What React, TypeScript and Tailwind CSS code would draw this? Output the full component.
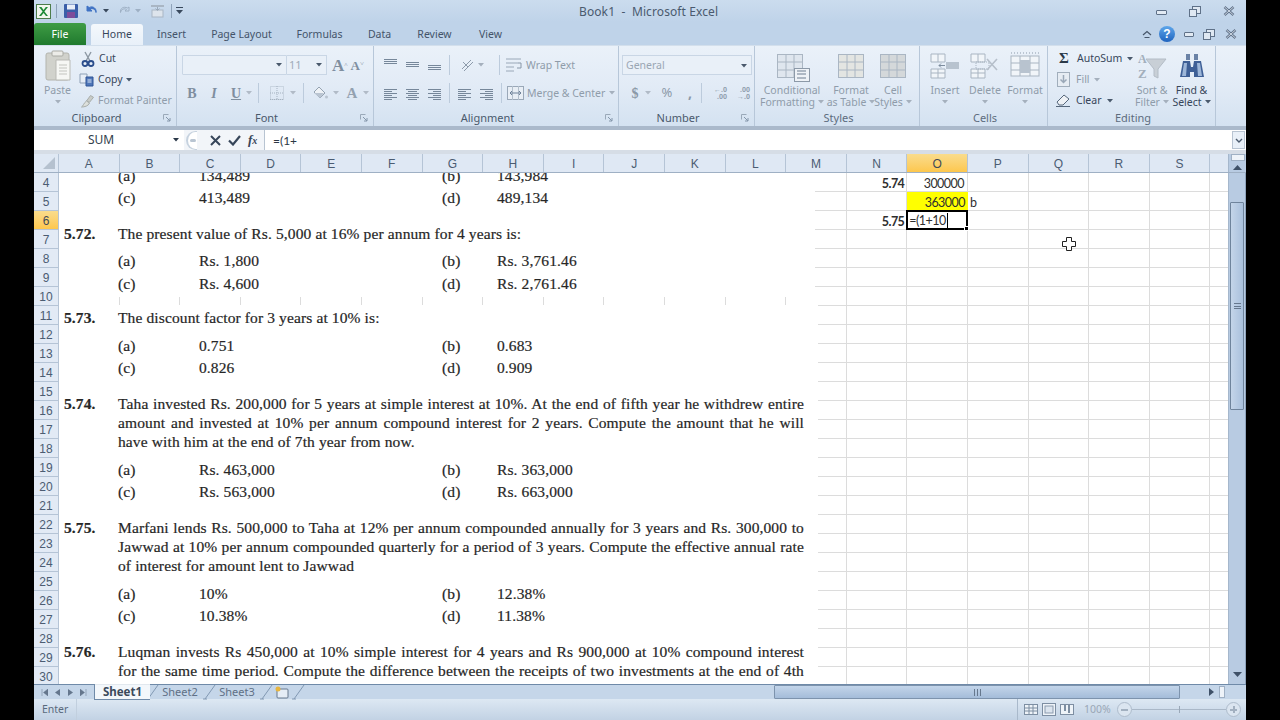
import React from 'react';

const COLS = ['A','B','C','D','E','F','G','H','I','J','K','L','M','N','O','P','Q','R','S'];
const ROWS = Array.from({ length: 27 }, (_, i) => i + 4);

const off = 'text-[#8f9caa]';
const on = 'text-[#37465a]';

function Arrow({ c = '#8a97a6' }: { c?: string }) {
  return <svg width="6" height="4" viewBox="0 0 6 4" className="shrink-0"><path d="M0 0h6L3 3.5z" fill={c} /></svg>;
}

function Sep({ h = 'h-[20px]' }: { h?: string }) {
  return <div className={`w-px shrink-0 bg-[#bccbdc] ${h}`} />;
}

function Launcher() {
  return (
    <svg width="9" height="9" viewBox="0 0 9 9" className="absolute right-[4px] bottom-[3px]">
      <path d="M0.5 0.5h5M0.5 0.5v5" stroke="#9aa9b9" fill="none" />
      <path d="M3 3l4 4M7 4v3H4" stroke="#8496aa" fill="none" />
    </svg>
  );
}

function Group({ w, label, launcher, dim, children }: { w: string; label: string; launcher?: boolean; dim?: boolean; children: React.ReactNode }) {
  return (
    <div className={`${w} shrink-0 h-full relative flex flex-col border-r border-[#b7c7d9]`}>
      <div className="h-[65px] flex shrink-0">{children}</div>
      <div className={`h-[15px] flex items-center justify-center text-[11px] ${launcher ? 'pr-[17px]' : 'pl-[3px]'} ${dim ? 'text-[#5d6c7e]' : 'text-[#4a596c]'}`}>{label}</div>
      {launcher && <Launcher />}
    </div>
  );
}

function Big({ w, icon, a, b, arrow, dark }: { w: string; icon: React.ReactNode; a: string; b?: string; arrow?: boolean; dark?: boolean }) {
  return (
    <div className={`${w} shrink-0 flex flex-col items-center`}>
      <div className="h-[35px] flex items-center justify-center mt-[2px]">{icon}</div>
      <div className={`text-[10.5px] leading-[12px] whitespace-nowrap mt-[1px] ${dark ? on : off}`}>{a}</div>
      {b ? (
        <div className={`text-[10.5px] leading-[12px] whitespace-nowrap flex items-center gap-[3px] ${dark ? on : off}`}>
          {b}{arrow && <Arrow c={dark ? '#4a596c' : '#a5b0bd'} />}
        </div>
      ) : (
        <div className="h-[12px] flex items-center"><Arrow c="#a5b0bd" /></div>
      )}
    </div>
  );
}

function LinesIcon({ kind }: { kind: 'top' | 'mid' | 'bot' | 'left' | 'center' | 'right' }) {
  const L: Record<string, number[][]> = {
    top: [[1, 3, 13], [1, 5, 13], [1, 7, 13]],
    mid: [[1, 6, 13], [1, 8, 13], [1, 10, 13]],
    bot: [[1, 9, 13], [1, 11, 13], [1, 13, 13]],
    left: [[1, 3, 13], [1, 5, 8], [1, 7, 13], [1, 9, 8], [1, 11, 13], [1, 13, 8]],
    center: [[1, 3, 13], [3, 5, 9], [1, 7, 13], [3, 9, 9], [1, 11, 13], [3, 13, 9]],
    right: [[1, 3, 13], [6, 5, 8], [1, 7, 13], [6, 9, 8], [1, 11, 13], [6, 13, 8]],
  };
  return (
    <svg width="14" height="15" viewBox="0 0 14 15">
      {L[kind].map((l, i) => <rect key={i} x={l[0]} y={l[1]} width={l[2]} height="1" fill="#76879a" />)}
    </svg>
  );
}

function TableIcon({ w = 26, h = 24, fill = '#dfe6ee' }: { w?: number; h?: number; fill?: string }) {
  return (
    <svg width={w} height={h} viewBox="0 0 26 24">
      <rect x="0.5" y="0.5" width="25" height="23" fill={fill} stroke="#aab6c3" />
      <path d="M0 8h26M0 16h26M9 0v24M17 0v24" stroke="#aab6c3" />
    </svg>
  );
}

function App() {
  return (
    <div className="w-[1280px] h-[720px] bg-black overflow-hidden font-['Noto_Sans',sans-serif] text-[11px]">
      <div className="ml-[34px] w-[1212px] h-[720px] flex flex-col bg-[#c8d8ea]">
        <TitleBar />
        <TabBar />
        <Ribbon />
        <div className="h-[4px] shrink-0 bg-[#aab9cb]" />
        <FormulaBar />
        <div className="h-[4px] shrink-0 bg-[#d6dde6]" />
        <ColumnHeader />
        <SheetBody />
        <SheetTabs />
        <StatusBar />
      </div>
    </div>
  );
}

function TitleBar() {
  return (
    <div className="h-[22px] shrink-0 flex items-center bg-gradient-to-b from-[#cbdcee] to-[#bfd3e9] relative">
      <div className="flex items-center pl-[2px] gap-[4px] w-[180px]">
        <svg width="15" height="15" viewBox="0 0 15 15">
          <rect x="0.5" y="0.5" width="14" height="14" fill="#f3f7ee" stroke="#4d7c4a" />
          <path d="M3 3l3.6 4.6L3 12h2.2l2.4-3 2.4 3H12L8.4 7.6 12 3H9.8L7.6 6 5.4 3z" fill="#1f8a37" />
        </svg>
        <div className="w-px h-[14px] bg-[#8fa3ba] ml-[1px]" />
        <svg width="16" height="16" viewBox="0 0 16 16" className="ml-[2px]">
          <rect x="1" y="1" width="14" height="14" rx="1" fill="#3a5ea8" />
          <rect x="4" y="1.5" width="8" height="5" fill="#e8eef8" />
          <rect x="4" y="9" width="8" height="6" fill="#7d4c9a" />
        </svg>
        <svg width="14" height="14" viewBox="0 0 14 14" className="ml-[2px]">
          <path d="M2 2v5h5L5 5.2C7.5 3.8 10.5 5 11 8.5c.9-3.8-3-7-6.8-5L2 2z" fill="#3f72c4" stroke="#3f72c4" />
        </svg>
        <Arrow c="#39495d" />
        <svg width="14" height="14" viewBox="0 0 14 14" className="ml-[4px]">
          <path d="M12 3v4H8l1.5-1.5C7.5 4 4.5 5 3.5 8.5 2.8 4.5 6.5 2 10.4 4z" fill="none" stroke="#9eb0c4" />
        </svg>
        <Arrow c="#9eb0c4" />
        <svg width="16" height="16" viewBox="0 0 16 16" className="ml-[5px]">
          <rect x="1" y="2" width="13" height="2" fill="#a9b6c4" />
          <rect x="2" y="7" width="11" height="7" fill="#dde4ec" stroke="#a9b6c4" />
          <path d="M7.5 4v3M5.5 5.5l2 2 2-2" stroke="#9aa9b9" fill="none" />
        </svg>
        <div className="w-px h-[14px] bg-[#8fa3ba] ml-[1px]" />
        <svg width="7" height="8" viewBox="0 0 7 8"><rect x="0" y="0" width="7" height="1" fill="#39495d" /><path d="M0 3h7L3.5 7z" fill="#39495d" /></svg>
      </div>
      <div className="absolute left-[545px] top-[4px] text-[12px] leading-[16px] text-[#4a5a6e] whitespace-pre tracking-[0.1px]">Book1  -  Microsoft Excel</div>
      <div className="ml-auto flex items-center pr-[11px] gap-[22px]">
        <div className="w-[11px] h-[5px] border border-[#5f7188] rounded-[1px] bg-[#e2eaf3] mt-[2px]" />
        <svg width="12" height="11" viewBox="0 0 12 11"><rect x="3.5" y="0.5" width="8" height="7" fill="#dfe8f2" stroke="#5f7188" /><rect x="0.5" y="3.5" width="7" height="7" fill="#dfe8f2" stroke="#5f7188" /></svg>
        <svg width="12" height="10" viewBox="0 0 12 10"><path d="M1.5 1L10.5 9M10.5 1L1.5 9" stroke="#5f7188" strokeWidth="2.4" /><path d="M1.5 1L10.5 9M10.5 1L1.5 9" stroke="#e6eef6" strokeWidth="0.8" /></svg>
      </div>
    </div>
  );
}

function TabBar() {
  const tabs: [string, string][] = [['Insert', 'w-[57px]'], ['Page Layout', 'w-[83px]'], ['Formulas', 'w-[73px]'], ['Data', 'w-[47px]'], ['Review', 'w-[63px]'], ['View', 'w-[49px]']];
  return (
    <div className="h-[23px] shrink-0 flex items-end bg-[#bfd3e9] relative">
      <div className="w-[52px] h-[22px] pt-[1px] bg-gradient-to-b from-[#3f9c45] to-[#1f7a2e] rounded-t-[3px] text-white flex items-center justify-center text-[10.5px]">File</div>
      <div className="ml-[5px] w-[52px] h-[21px] pt-[1px] bg-gradient-to-b from-[#f4f8fc] to-[#e8f0f9] rounded-t-[3px] text-[#37465a] flex items-center justify-center text-[10.5px]">Home</div>
      {tabs.map(([t, w]) => (
        <div key={t} className={`${w} shrink-0 h-[21px] pt-[1px] flex items-center justify-center text-[#44546a] text-[10.5px]`}>{t}</div>
      ))}
      <div className="ml-auto h-[22px] flex items-center pr-[9px] gap-[7px]">
        <svg width="10" height="8" viewBox="0 0 10 8"><path d="M1 5l4-3.5L9 5M2.5 7.5h5" stroke="#46566a" fill="none" strokeWidth="1.2" /></svg>
        <div className="w-[16px] h-[16px] rounded-full bg-gradient-to-b from-[#5ea6ea] to-[#1f64bf] text-white font-bold text-[12px] leading-[16px] text-center font-['Liberation_Sans',sans-serif]">?</div>
        <div className="w-[10px] h-[5px] border border-[#5f7188] rounded-[1px] bg-[#e2eaf3] ml-[2px]" />
        <svg width="12" height="11" viewBox="0 0 12 11" className="ml-[2px]"><rect x="3.5" y="0.5" width="8" height="7" fill="#dfe8f2" stroke="#5f7188" /><rect x="0.5" y="3.5" width="7" height="7" fill="#dfe8f2" stroke="#5f7188" /></svg>
        <svg width="12" height="10" viewBox="0 0 12 10" className="ml-[3px]"><path d="M1.5 1L10.5 9M10.5 1L1.5 9" stroke="#5f7188" strokeWidth="2.4" /><path d="M1.5 1L10.5 9M10.5 1L1.5 9" stroke="#e6eef6" strokeWidth="0.8" /></svg>
      </div>
    </div>
  );
}

function Ribbon() {
  return (
    <div className="h-[81px] shrink-0 flex bg-gradient-to-b from-[#eaf1f9] via-[#e2ebf6] to-[#d4e2f1] border-t border-[#d3dfec]">
      <Group w="w-[143px]" label="Clipboard" launcher>
        <Big w="w-[47px]" a="Paste" icon={
          <svg width="26" height="31" viewBox="0 0 26 31">
            <rect x="1" y="3" width="23" height="27" rx="2" fill="#d1d2cc" stroke="#b3b4ae" />
            <rect x="7" y="1" width="11" height="5" rx="1" fill="#ecece8" stroke="#a9aaa4" />
            <path d="M11 10h14v20H11z" fill="#f6f7f4" stroke="#b9bab5" />
            <path d="M14 15h8M14 18h8M14 21h8M14 24h8" stroke="#c3c4bf" />
          </svg>} />
        <div className="flex flex-col pt-[1px]">
          <div className="h-[21px] flex items-center gap-[4px] mt-[1px]">
            <svg width="14" height="16" viewBox="0 0 14 16">
              <path d="M4 1l5 9M10 1L5 10" stroke="#8d98a3" strokeWidth="1.4" />
              <circle cx="4" cy="12.5" r="2.5" fill="none" stroke="#2a4d8c" strokeWidth="1.8" />
              <circle cx="10" cy="12.5" r="2.5" fill="none" stroke="#2a4d8c" strokeWidth="1.8" />
            </svg>
            <span className={`${on} text-[10.5px]`}>Cut</span>
          </div>
          <div className="h-[21px] flex items-center gap-[3px] -ml-[2px]">
            <svg width="16" height="14" viewBox="0 0 16 14">
              <path d="M1 1h7v9H1z" fill="#e7eef7" stroke="#8ea0b6" />
              <path d="M7 4h7v9H7z" fill="#4f76b8" stroke="#2f5597" />
              <path d="M8.500 7h4M8.500 9h4" stroke="#dbe6f5" />
            </svg>
            <span className={`${on} text-[10.5px]`}>Copy</span>
            <Arrow c="#4a596c" />
          </div>
          <div className="h-[21px] flex items-center gap-[3px] -ml-[2px]">
            <svg width="16" height="14" viewBox="0 0 15 14">
              <path d="M7 7L11 1.500l3 1.800-4 5z" fill="#c9ccc8" stroke="#a8adaa" />
              <path d="M2 13c2-1 2-4 5-6l3 2c-1 3-5 4-8 4z" fill="#dde0dc" stroke="#a8adaa" />
            </svg>
            <span className={`${off} text-[10.5px] whitespace-nowrap`}>Format Painter</span>
          </div>
        </div>
      </Group>

      <Group w="w-[197px]" label="Font" launcher>
        <div className="flex flex-col pl-[5px]">
          <div className="flex items-center h-[20px] mt-[9px]">
            <div className="w-[105px] h-[20px] border border-[#c9d6e5] bg-[#e9f0f8] flex items-center justify-end pr-[4px] rounded-l-[1px]"><Arrow c="#4a596c" /></div>
            <div className="w-[40px] h-[20px] border border-l-0 border-[#c9d6e5] bg-[#e9f0f8] flex items-center justify-between pl-[2px] pr-[4px] text-[#a0acb9] text-[11px]">11<Arrow c="#4a596c" /></div>
            <span className="ml-[5px] text-[17px] leading-[17px] font-bold text-[#7f8e9f] font-['Liberation_Serif',serif]">A<sup className="text-[7px] font-normal">^</sup></span>
            <span className="ml-[3px] text-[13px] leading-[13px] font-bold text-[#7f8e9f] font-['Liberation_Serif',serif]">A<sup className="text-[7px] font-normal">˅</sup></span>
          </div>
          <div className="flex items-center h-[20px] mt-[8px] font-['Liberation_Serif',serif] text-[#7f8e9f]">
            <span className="w-[20px] text-center font-bold text-[14px]">B</span>
            <span className="w-[20px] ml-[2px] text-center italic font-bold text-[14px]">I</span>
            <span className="w-[20px] ml-[2px] text-center font-bold text-[14px] underline">U</span>
            <span className="w-[8px] flex"><Arrow c="#b1bbc7" /></span>
            <span className="ml-[4px]"><Sep /></span>
            <svg width="14" height="14" viewBox="0 0 14 14" className="ml-[11px]">
              <rect x="0.500" y="0.500" width="13" height="13" fill="none" stroke="#b3bfcc" strokeDasharray="1 1" />
              <path d="M0 7h14M7 0v14M0 13.500h14" stroke="#a5b2c0" strokeDasharray="1 1" />
            </svg>
            <span className="ml-[6px]"><Arrow c="#b1bbc7" /></span>
            <span className="ml-[7px]"><Sep /></span>
            <svg width="17" height="15" viewBox="0 0 17 15" className="ml-[8px]">
              <path d="M7 1l6 6-5 5-6-6z" fill="#eef2f6" stroke="#94a2b1" />
              <path d="M2 7h10l-4 5z" fill="#bac5d2" />
              <circle cx="14.500" cy="11" r="1.500" fill="#b9c3cf" />
            </svg>
            <span className="ml-[4px]"><Arrow c="#b1bbc7" /></span>
            <span className="ml-[6px] w-[14px] text-center font-bold text-[15px] text-[#93a1b0]">A</span>
            <span className="ml-[4px]"><Arrow c="#b1bbc7" /></span>
          </div>
        </div>
      </Group>

      <Group w="w-[245px]" label="Alignment" launcher>
        <div className="flex flex-col pl-[5px]">
          <div className="flex items-center h-[20px] mt-[9px]">
            <span className="w-[22px] flex justify-center -mt-[3px]"><LinesIcon kind="top" /></span>
            <span className="w-[22px] flex justify-center -mt-[3px]"><LinesIcon kind="mid" /></span>
            <span className="w-[22px] flex justify-center -mt-[3px]"><LinesIcon kind="bot" /></span>
            <span className="ml-[4px]"><Sep /></span>
            <svg width="16" height="14" viewBox="0 0 16 14" className="ml-[10px]"><path d="M2 11L11 2M4 13L13 4M3 4l5 5" stroke="#8d9bab" fill="none" /></svg>
            <span className="ml-[2px]"><Arrow c="#a5b0bd" /></span>
            <span className="ml-[15px]"><Sep /></span>
            <svg width="17" height="14" viewBox="0 0 17 14" className="ml-[6px]"><path d="M0 1h15M0 5h12M0 9h8M0 13h8" stroke="#9aa8b8" /><path d="M12 5h3v5h-4" stroke="#8796a7" fill="none" /></svg>
            <span className={`${off} ml-[3px] mt-[2px] text-[10.5px]`}>Wrap Text</span>
          </div>
          <div className="flex items-center h-[20px] mt-[8px]">
            <span className="w-[22px] flex justify-center"><LinesIcon kind="left" /></span>
            <span className="w-[22px] flex justify-center"><LinesIcon kind="center" /></span>
            <span className="w-[22px] flex justify-center"><LinesIcon kind="right" /></span>
            <span className="ml-[4px]"><Sep /></span>
            <span className="ml-[3px] w-[22px] flex justify-center"><LinesIcon kind="left" /></span>
            <span className="w-[22px] flex justify-center"><LinesIcon kind="right" /></span>
            <span className="ml-[4px]"><Sep /></span>
            <svg width="17" height="14" viewBox="0 0 17 14" className="ml-[5px]"><rect x="0.500" y="0.500" width="16" height="13" fill="#e8eef5" stroke="#9aa8b8" /><path d="M5.500 0v14M11.500 0v14" stroke="#b3bfcc" /><path d="M3 7h11M5 5L3 7l2 2M12 5l2 2-2 2" stroke="#6f8299" fill="none" /></svg>
            <span className={`${off} ml-[3px] mt-[2px] text-[10.5px] whitespace-nowrap`}>Merge &amp; Center</span>
            <span className="ml-[4px]"><Arrow c="#a5b0bd" /></span>
          </div>
        </div>
      </Group>

      <Group w="w-[136px]" label="Number" launcher>
        <div className="flex flex-col pl-[3px]">
          <div className="w-[130px] h-[20px] mt-[9px] pt-[1px] border border-[#c9d6e5] bg-[#e9f0f8] flex items-center justify-between pl-[3px] pr-[4px] text-[#9aa6b3] text-[10.5px]">General<Arrow c="#4a596c" /></div>
          <div className="flex items-center h-[20px] mt-[8px] text-[#8c99a8]">
            <span className="ml-[8px] w-[10px] text-center text-[14px] font-bold font-['Liberation_Serif',serif]">$</span>
            <span className="ml-[5px]"><Arrow c="#b1bbc7" /></span>
            <span className="ml-[8px] w-[16px] text-center text-[13px]">%</span>
            <span className="ml-[12px] w-[6px] text-center text-[14px] font-bold leading-[14px]">,</span>
            <span className="ml-[8px]"><Sep /></span>
            <span className="ml-[7px] w-[18px] text-[7px] leading-[7px] font-bold text-[#93a1b0] text-right">←.0<br />.00</span>
            <span className="ml-[5px] w-[18px] text-[7px] leading-[7px] font-bold text-[#93a1b0] text-right">.00<br />→.0</span>
          </div>
        </div>
      </Group>

      <Group w="w-[165px]" label="Styles" dim>
        <div className="flex pl-[6px]">
          <Big w="w-[62px]" a="Conditional" b="Formatting" arrow icon={
            <div className="relative w-[27px] h-[24px] -ml-[4px]">
              <TableIcon />
              <svg width="16" height="14" viewBox="0 0 16 14" className="absolute -right-[6px] -bottom-[4px]"><rect x="0.500" y="0.500" width="15" height="13" fill="#eef2f7" stroke="#8c99a8" /><path d="M3 3h9M3 6h9M3 10h9" stroke="#6f7f91" /></svg>
            </div>} />
          <Big w="w-[56px]" a="Format" b="as Table" arrow icon={<TableIcon fill="#e3e5e2" />} />
          <Big w="w-[28px]" a="Cell" b="Styles" arrow icon={<TableIcon fill="#d4d8da" />} />
        </div>
      </Group>

      <Group w="w-[128px]" label="Cells" dim>
        <div className="flex pl-[5px]">
          <Big w="w-[40px]" a="Insert" icon={
            <svg width="30" height="26" viewBox="0 0 30 26">
              <path d="M1 1h14v8H1zM1 16h14v9H1zM8 1v8M8 16v9M1 20h14" fill="#f1f5f9" stroke="#a9b5c2" />
              <rect x="16" y="9" width="13" height="7" fill="#b8c3cf" />
              <path d="M15 12.500H9M11 10.500l-2 2 2 2" stroke="#7d8d9e" fill="none" />
            </svg>} />
          <Big w="w-[40px]" a="Delete" icon={
            <svg width="30" height="26" viewBox="0 0 30 26">
              <path d="M1 1h14v8H1zM1 16h14v9H1zM8 1v8M8 16v9M1 20h14" fill="#f1f5f9" stroke="#a9b5c2" />
              <rect x="6" y="9" width="13" height="7" fill="none" stroke="#a9b5c2" strokeDasharray="1 1" />
              <path d="M17 6l10 11M27 6L17 17" stroke="#b6bfca" strokeWidth="1.600" />
            </svg>} />
          <Big w="w-[40px]" a="Format" icon={
            <svg width="30" height="28" viewBox="0 0 30 28">
              <path d="M1 1h28" stroke="#8d9bab" strokeDasharray="1 2" />
              <rect x="1" y="4" width="28" height="20" fill="#f1f5f9" stroke="#a9b5c2" />
              <path d="M10 4v20M20 4v20M1 11h28M1 18h28" stroke="#a9b5c2" />
              <rect x="10" y="8" width="10" height="13" fill="#b8c3cf" />
            </svg>} />
        </div>
      </Group>

      <Group w="w-[168px]" label="Editing" dim>
        <div className="flex pl-[8px]">
          <div className="w-[78px] flex flex-col shrink-0">
            <div className="h-[21px] flex items-center mt-[2px]">
              <span className="w-[16px] text-center text-[15px] font-bold text-[#2a3848] font-['Liberation_Serif',serif] leading-[15px]">Σ</span>
              <span className={`${on} ml-[5px] text-[10.5px]`}>AutoSum</span>
              <span className="ml-[5px]"><Arrow c="#4a596c" /></span>
            </div>
            <div className="h-[21px] flex items-center">
              <svg width="13" height="15" viewBox="0 0 13 15" className="ml-[1px]"><rect x="0.500" y="0.500" width="12" height="14" fill="#e6ecf3" stroke="#a1aebc" /><path d="M6.500 3v7M3.500 7.500l3 3 3-3" stroke="#9aa8b8" fill="none" strokeWidth="1.500" /></svg>
              <span className={`${off} ml-[6px] text-[10.5px]`}>Fill</span>
              <span className="ml-[4px]"><Arrow c="#a5b0bd" /></span>
            </div>
            <div className="h-[21px] flex items-center">
              <svg width="15" height="13" viewBox="0 0 15 13"><path d="M1 8l7-7 5 4-6 6H3z" fill="#eef1f5" stroke="#56677b" /><path d="M0 12.500h14" stroke="#56677b" /></svg>
              <span className={`${on} ml-[5px] text-[10.5px]`}>Clear</span>
              <span className="ml-[5px]"><Arrow c="#4a596c" /></span>
            </div>
          </div>
          <Big w="w-[36px]" a="Sort &" b="Filter" arrow icon={
            <svg width="30" height="28" viewBox="0 0 30 28">
              <path d="M9 7h20l-8 10v9l-4-2v-7z" fill="#c8cfd6" stroke="#b3bcc6" />
              <text x="1" y="11" fontSize="12" fontWeight="700" fontFamily="Liberation Serif" fill="#a3afbc">A</text>
              <text x="1" y="26" fontSize="13" fontWeight="700" fontFamily="Liberation Serif" fill="#a3afbc">Z</text>
            </svg>} />
          <Big w="w-[43px]" a="Find &" b="Select" arrow dark icon={
            <svg width="26" height="26" viewBox="0 0 26 26">
              <path d="M7 1h4v6H7zM15 1h4v6h-4z" fill="#6a82a6" />
              <path d="M4 8h7l1 6h2l1-6h7l3 16H15v-5h-4v5H1z" fill="#3e5f96" />
              <path d="M5 10h3l-1 13H3zM18 10h3l2 13h-4z" fill="#9db6d8" />
            </svg>} />
        </div>
      </Group>
      <div className="flex-1" />
    </div>
  );
}

function FormulaBar() {
  return (
    <div className="h-[20px] shrink-0 flex bg-white items-center">
      <div className="w-[150px] h-full flex items-center relative pr-[5px]">
        <span className="absolute left-[54px] top-[1px] leading-[18px] text-[12px] text-[#333f4d]">SUM</span>
        <span className="ml-auto"><Arrow c="#2a3848" /></span>
      </div>
      <div className="w-[81px] h-full flex items-center relative bg-[#f2f5f9] border-r border-[#b8c4d2]">
        <div className="w-[11px] h-[19px] ml-[2px] rounded-l-full border-l-2 border-y border-[#c6d2df] bg-white" />
        <span className="w-[6px] h-[3px] -ml-[7px] rounded-full bg-[#b9c5d2]" />
        <svg width="11" height="11" viewBox="0 0 11 11" className="ml-[14px]"><path d="M1 1l9 9M10 1l-9 9" stroke="#37465a" strokeWidth="2" /></svg>
        <svg width="13" height="11" viewBox="0 0 13 11" className="ml-[7px]"><path d="M1 5.500l4 4L12 1" stroke="#37465a" strokeWidth="2.200" fill="none" /></svg>
        <span className="ml-[7px] font-['Liberation_Serif',serif] italic font-bold text-[13px] text-[#37465a]">f<span className="text-[10px]">x</span></span>
      </div>
      <div className="flex-1 h-full flex items-center pl-[8px] pt-[1px] text-[12px] text-[#2c3744] font-['Lato',sans-serif]">=(1+</div>
      <div className="w-[13px] h-[18px] mr-[1px] border border-[#b8c4d2] bg-[#e9f0f8] flex items-center justify-center">
        <svg width="8" height="5" viewBox="0 0 8 5"><path d="M1 1l3 3 3-3" stroke="#4a596c" strokeWidth="1.400" fill="none" /></svg>
      </div>
    </div>
  );
}

function ColumnHeader() {
  return (
    <div className="h-[19px] shrink-0 flex bg-[#dfe8f4] border-b border-[#9fb0c4]">
      <div className="w-[25px] shrink-0 flex items-end justify-end p-[3px] border-r border-[#b5c4d6]">
        <svg width="12" height="12" viewBox="0 0 12 12"><path d="M12 0v12H0z" fill="#b5c1cf" /></svg>
      </div>
      <div className="w-[1169px] shrink-0 flex overflow-hidden">
        {COLS.map((c) => (
          <div key={c} className={`w-[60.6px] shrink-0 pt-[1px] border-r border-[#b5c4d6] flex items-center justify-center text-[12px] font-['Liberation_Sans',sans-serif] ${c === 'O' ? 'bg-gradient-to-b from-[#f9dc8c] to-[#fdc74c] text-[#3f4a58]' : 'text-[#4b5c72]'}`}>{c}</div>
        ))}
      </div>
      <div className="flex-1 bg-[#b8cbe2] flex flex-col items-center border-l border-[#a5b7cc]">
        <div className="w-[14px] h-[7px] bg-[#eef3f9] border border-[#9fb0c4]" />
        <svg width="9" height="5" viewBox="0 0 9 5" className="mt-[4px]"><path d="M4.500 0l4.500 5H0z" fill="#3f5168" /></svg>
      </div>
    </div>
  );
}

function cellContent(row: number, col: string) {
  if (row === 4 && col === 'N') return <div className="h-full pt-[4px] flex items-center justify-end pr-[2px] font-bold">5.74</div>;
  if (row === 4 && col === 'O') return <div className="h-full pt-[4px] flex items-center justify-end pr-[3px]">300000</div>;
  if (row === 5 && col === 'O') return <div className="h-full pt-[4px] flex items-center justify-end pr-[3px] bg-[#ffff00] -mr-px -mb-px">363000</div>;
  if (row === 5 && col === 'P') return <div className="h-full pt-[4px] flex items-center pl-[2px]">b</div>;
  if (row === 6 && col === 'N') return <div className="h-full pt-[4px] flex items-center justify-end pr-[2px] font-bold">5.75</div>;
  if (row === 6 && col === 'O') return (
    <div className="absolute -left-px -top-px w-[62px] h-[20px] border-2 border-black bg-white flex items-center pl-[1px] pt-[3px] z-10">
      <span>=(1+10</span><span className="w-px h-[15px] bg-black ml-[1px] -mt-[3px]" />
      <span className="absolute -right-[3px] -bottom-[3px] w-[5px] h-[5px] bg-black border border-white" />
    </div>
  );
  return null;
}

const serif = "font-['Liberation_Serif',serif] text-[15.5px] tracking-[0.12px] text-[#262626] [-webkit-text-stroke:0.2px_#262626]";

function Line({ children, last }: { children: React.ReactNode; last?: boolean }) {
  return (
    <div className={`h-[19px] leading-[17px] w-[686px] whitespace-nowrap ${last ? '' : 'text-justify [text-align-last:justify]'}`}>{children}</div>
  );
}

function Question({ n, lines, className = 'mt-[16px]' }: { n: string; lines: string[]; className?: string }) {
  return (
    <div className={`flex ${className}`}>
      <div className="w-[54px] h-[19px] leading-[17px] font-bold shrink-0">{n}</div>
      <div>{lines.map((l, i) => <Line key={l} last={i === lines.length - 1 && n !== '5.76.'}>{l}</Line>)}</div>
    </div>
  );
}

function Answer({ l, a, r, b, className = '' }: { l: string; a: string; r: string; b: string; className?: string }) {
  return (
    <div className={`h-[22px] leading-[22px] flex pl-[54px] ${className}`}>
      <div className="w-[81px]">{l}</div>
      <div className="w-[243px]">{a}</div>
      <div className="w-[55px]">{r}</div>
      <div>{b}</div>
    </div>
  );
}

function SheetBody() {
  return (
    <div className="h-[511px] shrink-0 flex overflow-hidden">
      <div className="w-[25px] shrink-0 flex flex-col bg-[#e2eaf5]">
        {ROWS.map((r) => (
          <div key={r} className={`h-[19px] shrink-0 box-border pt-[1px] border-b border-r border-[#b5c4d6] flex items-center justify-center text-[12px] font-['Liberation_Sans',sans-serif] ${r === 6 ? 'bg-gradient-to-b from-[#f9dc8c] to-[#fdc74c] text-[#3f4a58]' : 'text-[#4b5c72]'}`}>{r}</div>
        ))}
      </div>
      <div className="w-[1169px] shrink-0 relative overflow-hidden bg-white font-['Lato',sans-serif] text-[12.5px] tracking-[-0.55px] text-[#2f2f2f]">
        {ROWS.map((r) => (
          <div key={r} className="h-[19px] flex">
            {COLS.map((c) => (
              <div key={c} className="w-[60.6px] h-[19px] shrink-0 box-border border-r border-b border-[#dcdcdc] relative">{cellContent(r, c)}</div>
            ))}
            <div className="flex-1 box-border border-b border-[#dcdcdc]" />
          </div>
        ))}

        {/* pasted picture lying over the cells */}
        <div className={`absolute left-0 top-0 w-[756px] h-[124px] bg-white overflow-hidden pl-[5px] ${serif}`}>
          <Answer className="-mt-[8px]" l="(a)" a="134,489" r="(b)" b="143,984" />
          <Answer l="(c)" a="413,489" r="(d)" b="489,134" />
          <Question n="5.72." lines={['The present value of Rs. 5,000 at 16% per annum for 4 years is:']} />
          <Answer className="mt-[6px]" l="(a)" a="Rs. 1,800" r="(b)" b="Rs. 3,761.46" />
          <Answer className="mt-[1px]" l="(c)" a="Rs. 4,600" r="(d)" b="Rs. 2,761.46" />
        </div>
        <div className={`absolute left-0 top-[132px] w-[759px] bottom-0 bg-white overflow-hidden pl-[5px] pt-[4px] ${serif}`}>
          <Question className="" n="5.73." lines={['The discount factor for 3 years at 10% is:']} />
          <Answer className="mt-[7px]" l="(a)" a="0.751" r="(b)" b="0.683" />
          <Answer l="(c)" a="0.826" r="(d)" b="0.909" />
          <Question n="5.74." lines={[
            'Taha invested Rs. 200,000 for 5 years at simple interest at 10%. At the end of fifth year he withdrew entire',
            'amount and invested at 10% per annum compound interest for 2 years. Compute the amount that he will',
            'have with him at the end of 7th year from now.',
          ]} />
          <Answer className="mt-[7px]" l="(a)" a="Rs. 463,000" r="(b)" b="Rs. 363,000" />
          <Answer l="(c)" a="Rs. 563,000" r="(d)" b="Rs. 663,000" />
          <Question n="5.75." lines={[
            'Marfani lends Rs. 500,000 to Taha at 12% per annum compounded annually for 3 years and Rs. 300,000 to',
            'Jawwad at 10% per annum compounded quarterly for a period of 3 years. Compute the effective annual rate',
            'of interest for amount lent to Jawwad',
          ]} />
          <Answer className="mt-[7px]" l="(a)" a="10%" r="(b)" b="12.38%" />
          <Answer l="(c)" a="10.38%" r="(d)" b="11.38%" />
          <Question n="5.76." lines={[
            'Luqman invests Rs 450,000 at 10% simple interest for 4 years and Rs 900,000 at 10% compound interest',
            'for the same time period. Compute the difference between the receipts of two investments at the end of 4th',
          ]} />
        </div>

        {/* mouse pointer */}
        <svg width="14" height="14" viewBox="0 0 14 14" className="absolute left-[1003px] top-[64px] z-20">
          <path d="M4.500 0.500h5v4h4v5h-4v4h-5v-4h-4v-5h4z" fill="#fff" stroke="#222" />
        </svg>
      </div>
      <div className="flex-1 flex flex-col items-center bg-[#b8cbe2] border-l border-[#a5b7cc] border-r-[1px] border-r-[#8ea3bc]">
        <div className="w-full h-[29px] shrink-0" />
        <div className="w-[14px] h-[208px] shrink-0 bg-gradient-to-r from-[#c4d5e9] to-[#a9c0dc] border border-[#6f849c] rounded-[1px] flex items-center justify-center">
          <div className="w-[7px] h-[6px] border-y border-[#66788e] relative"><div className="absolute left-0 right-0 top-[1.5px] h-px bg-[#66788e]" /></div>
        </div>
        <div className="flex-1" />
        <svg width="9" height="5" viewBox="0 0 9 5" className="mb-[7px]"><path d="M0 0h9L4.500 5z" fill="#3f5168" /></svg>
      </div>
    </div>
  );
}

function TabSlant({ w = 17 }: { w?: number }) {
  return (
    <svg width={w} height="15" viewBox={`0 0 ${w} 15`} className="shrink-0"><path d={`M${w - 12} 14L${w - 2} 0M${w - 14} 14h4`} stroke="#8299b3" fill="none" /></svg>
  );
}

function SheetTabs() {
  return (
    <div className="h-[15px] shrink-0 flex bg-[#c5d6e9] border-t border-[#6f8aa8] relative">
      <div className="w-[60px] shrink-0 flex items-center justify-around pl-[3px] pr-[3px]">
        <svg width="7" height="7" viewBox="0 0 7 7"><path d="M1 0v7M7 0v7L2.500 3.500z" fill="#65778d" stroke="#65778d" strokeWidth="0.500" /></svg>
        <svg width="5" height="7" viewBox="0 0 5 7"><path d="M5 0v7L0 3.500z" fill="#65778d" /></svg>
        <svg width="5" height="7" viewBox="0 0 5 7"><path d="M0 0v7l5-3.500z" fill="#65778d" /></svg>
        <svg width="7" height="7" viewBox="0 0 7 7"><path d="M6 0v7M0 0v7l4.500-3.500z" fill="#65778d" stroke="#65778d" strokeWidth="0.500" /></svg>
      </div>
      <div className="w-[56px] shrink-0 h-[16px] -mt-px bg-white/80 border-b border-[#6f8aa8] border-l border-[#6f8aa8] flex items-center justify-center text-[11.5px] font-bold text-[#3c4a5c]">Sheet1</div>
      <TabSlant w={10} />
      <div className="w-[40px] shrink-0 flex items-center justify-center text-[11px] text-[#5f7086]">Sheet2</div>
      <TabSlant />
      <div className="w-[40px] shrink-0 flex items-center justify-center text-[11px] text-[#5f7086]">Sheet3</div>
      <TabSlant />
      <svg width="16" height="13" viewBox="0 0 16 13" className="shrink-0 mt-[1px]"><rect x="3" y="3" width="11" height="9" rx="1" fill="#e5edf6" stroke="#66788e" /><circle cx="4" cy="3" r="2.500" fill="#e8b53e" /></svg>
      <TabSlant w={16} />
      <div className="flex-1" />
      <div className="w-[406px] shrink-0 h-[14px] bg-gradient-to-b from-[#c3d5ea] to-[#a4bcd9] border border-[#7d93ad] rounded-[1px] flex items-center justify-center">
        <div className="w-[7px] h-[7px] border-x border-[#66788e] relative"><div className="absolute top-0 bottom-0 left-[2px] w-px bg-[#66788e]" /></div>
      </div>
      <div className="w-[66px] shrink-0 flex items-center justify-start pl-[29px]">
        <svg width="5" height="8" viewBox="0 0 5 8"><path d="M0 0v8l5-4z" fill="#3f5168" /></svg>
        <div className="w-[6px] h-[12px] bg-[#eef3f9] border border-[#9fb0c4] ml-[5px]" />
      </div>
    </div>
  );
}

function StatusBar() {
  return (
    <div className="h-[21px] shrink-0 flex items-center bg-gradient-to-b from-[#dde8f3] to-[#c2d2e4] text-[#5a6a7d]">
      <div className="w-[43px] h-full flex items-center pl-[8px] pt-[1px] border-r border-[#c1cfde] text-[10.5px]">Enter</div>
      <div className="flex-1" />
      <div className="w-[229px] shrink-0 h-full border-l border-[#a9b9cb] flex items-center pl-[6px]">
        <svg width="14" height="11" viewBox="0 0 14 11" className="shrink-0"><rect x="0.500" y="0.500" width="13" height="10" fill="#eef3f8" stroke="#7d8ea2" /><path d="M0 4h14M0 7h14M5 0v11M9 0v11" stroke="#7d8ea2" /></svg>
        <svg width="14" height="13" viewBox="0 0 14 13" className="shrink-0 ml-[4px]"><rect x="0.500" y="0.500" width="13" height="12" fill="#eef3f8" stroke="#7d8ea2" /><rect x="3" y="3" width="8" height="7" fill="#dbe4ee" stroke="#8b9bae" /></svg>
        <svg width="14" height="11" viewBox="0 0 14 11" className="shrink-0 ml-[4px]"><rect x="0.500" y="0.500" width="13" height="10" fill="#eef3f8" stroke="#7d8ea2" /><path d="M5 1v6M9 1v8" stroke="#7d8ea2" strokeWidth="2" /></svg>
        <span className="ml-[10px] w-[27px] shrink-0 text-[10.5px] text-[#9aa7b6] whitespace-nowrap">100%</span>
        <div className="ml-[6px] shrink-0 w-[15px] h-[15px] rounded-full bg-[#dbe5f0] border border-[#aebccc] flex items-center justify-center"><div className="w-[7px] h-[2px] bg-[#a2b0c0]" /></div>
        <div className="w-[94px] shrink-0 h-[1px] bg-[#aab8c8] relative"><div className="absolute left-[47px] -top-[3px] w-px h-[7px] bg-[#9aa8b8]" /></div>
        <div className="w-[15px] shrink-0 h-[15px] rounded-full bg-[#dbe5f0] border border-[#aebccc] relative"><div className="absolute left-[3px] top-[5.500px] w-[7px] h-[2px] bg-[#a2b0c0]" /><div className="absolute left-[5.500px] top-[3px] w-[2px] h-[7px] bg-[#a2b0c0]" /></div>
      </div>
    </div>
  );
}

export default App;
